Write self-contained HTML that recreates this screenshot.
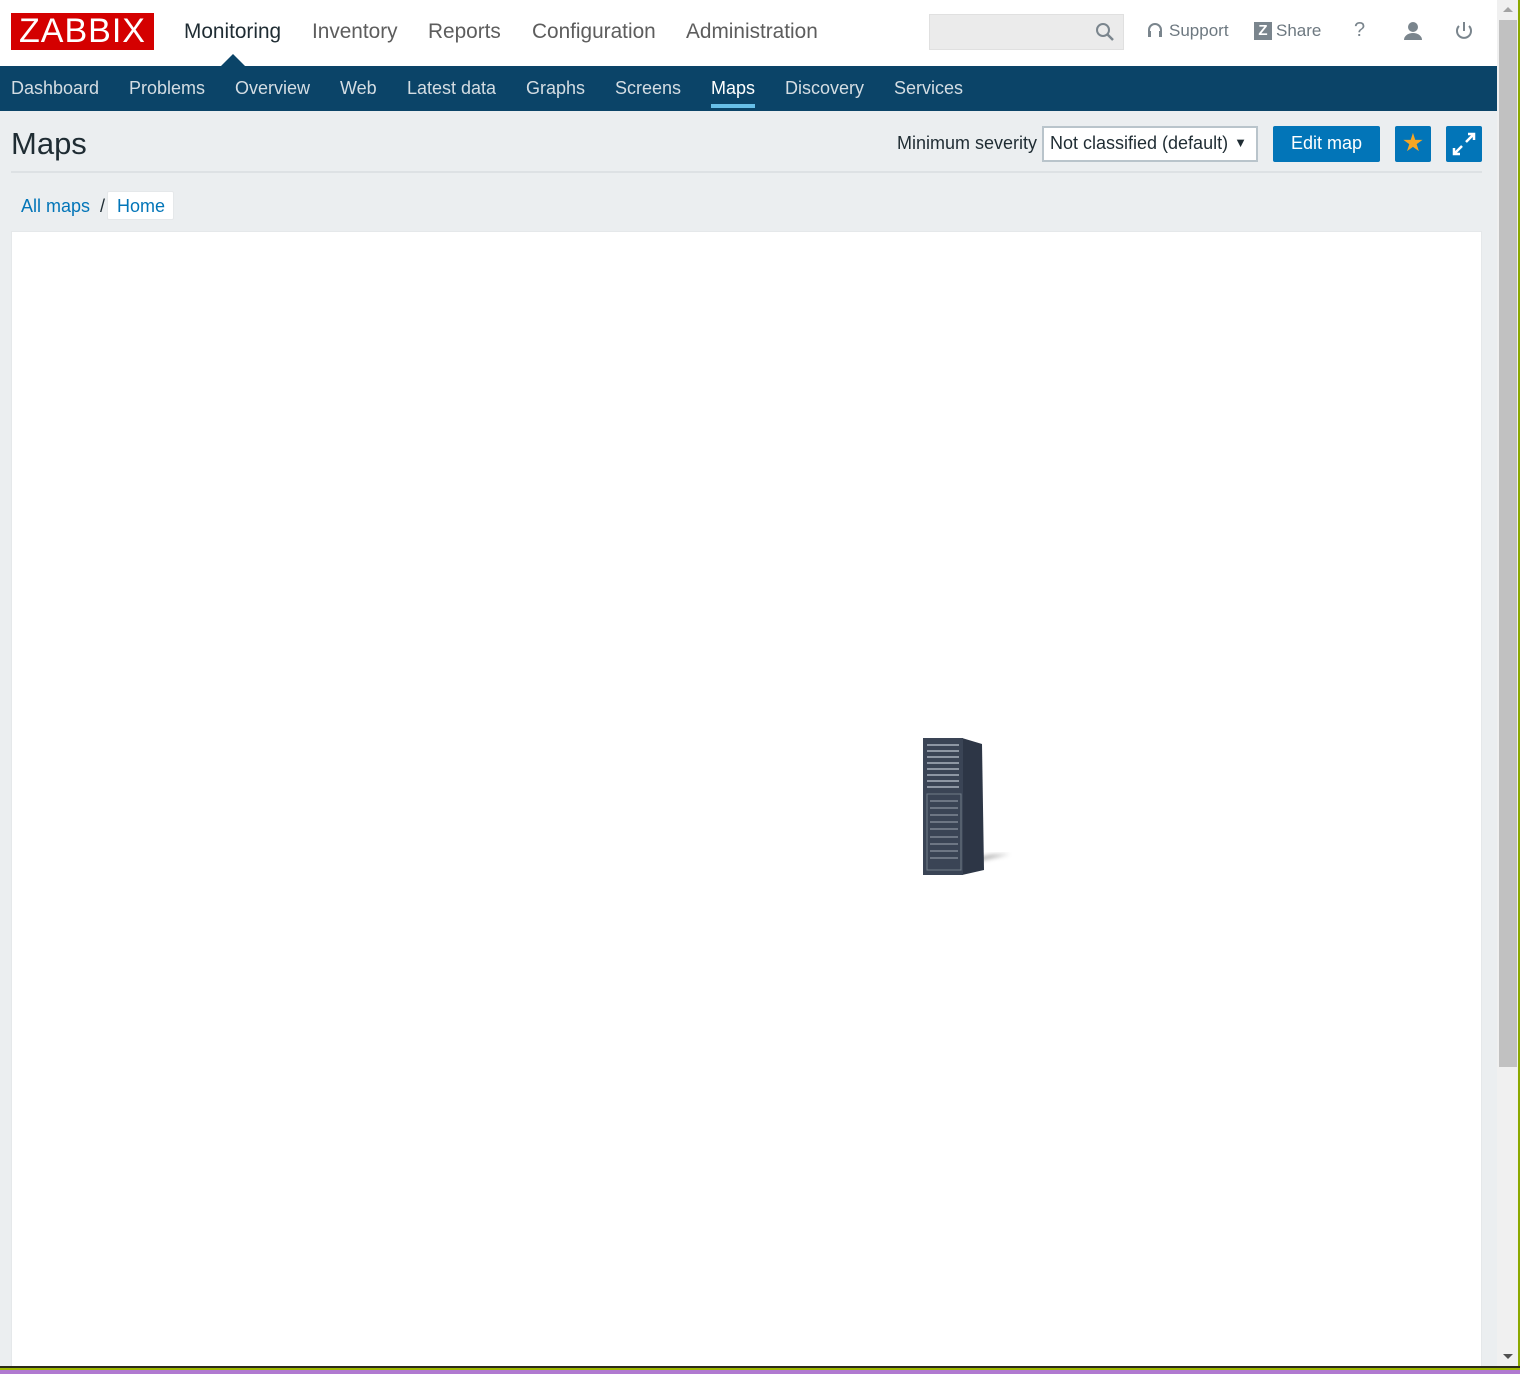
<!DOCTYPE html>
<html><head><style>
*{margin:0;padding:0;box-sizing:border-box}
body{width:1520px;height:1374px;overflow:hidden;background:#ebeef0;font-family:"Liberation Sans",sans-serif;position:relative}
.top{position:absolute;left:0;top:0;width:1497px;height:66px;background:#fff}
.logo{position:absolute;left:11px;top:13px;width:143px;height:37px;background:#d40000;color:#fff;font-size:34px;line-height:37px;text-align:center;letter-spacing:1px}
.mm{position:absolute;top:20px;font-size:20.8px;color:#5d5d5d}
.sub{position:absolute;left:0;top:66px;width:1497px;height:45px;background:#0b4468}
.sm{position:absolute;top:78px;font-size:18px;color:#d4dde3}
.abs{position:absolute}
</style></head><body>
<div class="top"></div>
<div class="logo">ZABBIX</div>
<div class="mm" style="left:184px;color:#1f2c33">Monitoring</div>
<div class="mm" style="left:312px">Inventory</div>
<div class="mm" style="left:428px">Reports</div>
<div class="mm" style="left:532px">Configuration</div>
<div class="mm" style="left:686px">Administration</div>
<div class="abs" style="left:929px;top:14px;width:195px;height:36px;background:#ebebeb;border:1px solid #e0e0e0"></div>
<svg class="abs" style="left:1094px;top:21px" width="22" height="22" viewBox="0 0 22 22"><circle cx="9" cy="9" r="6" fill="none" stroke="#7a858d" stroke-width="2"/><path d="M13 13l6 6" stroke="#7a858d" stroke-width="2.5"/></svg>
<svg class="abs" style="left:1146px;top:22px" width="18" height="18" viewBox="0 0 18 18"><path d="M3 11V8a6 6 0 0 1 12 0v3" fill="none" stroke="#7a858d" stroke-width="2"/><rect x="2" y="9" width="3" height="6" fill="#7a858d"/><rect x="13" y="9" width="3" height="6" fill="#7a858d"/></svg>
<div class="abs" style="left:1169px;top:21px;font-size:17px;color:#6d7880">Support</div>
<div class="abs" style="left:1254px;top:22px;width:18px;height:18px;background:#7a858d;color:#fff;font-weight:bold;font-size:15px;line-height:18px;text-align:center">Z</div>
<div class="abs" style="left:1276px;top:21px;font-size:17px;color:#6d7880">Share</div>
<div class="abs" style="left:1354px;top:19px;font-size:20px;color:#7a858d">?</div>
<svg class="abs" style="left:1402px;top:20px" width="22" height="22" viewBox="0 0 22 22"><circle cx="11" cy="7" r="5" fill="#7a858d"/><path d="M2 20a9 7 0 0 1 18 0z" fill="#7a858d"/></svg>
<svg class="abs" style="left:1453px;top:20px" width="22" height="22" viewBox="0 0 22 22"><path d="M6 6a7 7 0 1 0 10 0" fill="none" stroke="#7a858d" stroke-width="2"/><path d="M11 2v9" stroke="#7a858d" stroke-width="2"/></svg>
<div class="sub"></div>
<svg class="abs" style="left:220px;top:53px" width="26" height="14"><path d="M0 14L13 1L26 14z" fill="#0b4468"/></svg>
<div class="sm" style="left:11px">Dashboard</div>
<div class="sm" style="left:129px">Problems</div>
<div class="sm" style="left:235px">Overview</div>
<div class="sm" style="left:340px">Web</div>
<div class="sm" style="left:407px">Latest data</div>
<div class="sm" style="left:526px">Graphs</div>
<div class="sm" style="left:615px">Screens</div>
<div class="sm" style="left:711px;color:#fff">Maps</div>
<div class="abs" style="left:711px;top:104px;width:44px;height:4px;background:#68bfe8"></div>
<div class="sm" style="left:785px">Discovery</div>
<div class="sm" style="left:894px">Services</div>
<div class="abs" style="left:11px;top:126px;font-size:31px;color:#1f2c33">Maps</div>
<div class="abs" style="left:11px;top:171px;width:1471px;height:2px;background:#dde1e4"></div>
<div class="abs" style="left:897px;top:133px;font-size:18px;color:#1f2c33">Minimum severity</div>
<div class="abs" style="left:1042px;top:126px;width:216px;height:36px;background:#fff;border:2px solid #b9c4cb;font-size:18px;color:#1f2c33;padding:5px 0 0 6px">Not classified (default)<span style="position:absolute;right:9px;top:7px;font-size:13px">▼</span></div>
<div class="abs" style="left:1273px;top:126px;width:107px;height:36px;background:#0275b8;border-radius:2px;color:#fff;font-size:18px;text-align:center;line-height:35px">Edit map</div>
<div class="abs" style="left:1395px;top:126px;width:36px;height:36px;background:#0275b8;border-radius:2px;color:#f5a623;font-size:25px;text-align:center;line-height:35px">★</div>
<div class="abs" style="left:1446px;top:126px;width:36px;height:36px;background:#0275b8;border-radius:2px"></div>
<svg class="abs" style="left:1446px;top:126px" width="36" height="36"><path d="M20 16l7-7M22 8h6v6M16 20l-7 7M8 22v6h6" stroke="#fff" stroke-width="2.5" fill="none"/></svg>
<div class="abs" style="left:21px;top:196px;font-size:18px;color:#0275b8">All maps</div>
<div class="abs" style="left:100px;top:196px;font-size:18px;color:#1f2c33">/</div>
<div class="abs" style="left:107px;top:191px;width:67px;height:29px;background:#fff;border:1px solid #e5e8ea;border-radius:2px;font-size:18px;color:#0275b8;padding:4px 0 0 9px">Home</div>
<div class="abs" style="left:11px;top:231px;width:1471px;height:1140px;background:#fff;border:1px solid #e5e8ea"></div>
<svg class="abs" style="left:910px;top:730px" width="110" height="150">
<defs><filter id="b"><feGaussianBlur stdDeviation="2"/></filter></defs>
<path d="M20 142L100 124L80 125L20 138z" fill="#555" opacity=".5" filter="url(#b)"/>
<path d="M52 8L72 14L74 140L52 145z" fill="#2d3646"/>
<rect x="13" y="8" width="40" height="137" fill="#3a4455"/>
<g fill="#8d96a3"><rect x="17" y="14" width="32" height="2"/><rect x="17" y="20" width="32" height="2"/><rect x="17" y="26" width="32" height="2"/><rect x="17" y="32" width="32" height="2"/><rect x="17" y="38" width="32" height="2"/><rect x="17" y="44" width="32" height="2"/><rect x="17" y="50" width="32" height="2"/><rect x="17" y="56" width="32" height="2"/></g>
<rect x="17" y="64" width="34" height="76" fill="none" stroke="#707b88"/>
<g fill="#6d7684"><rect x="20" y="70" width="28" height="2"/><rect x="20" y="77" width="28" height="2"/><rect x="20" y="84" width="28" height="2"/><rect x="20" y="91" width="28" height="2"/><rect x="20" y="98" width="28" height="2"/><rect x="20" y="106" width="28" height="2"/><rect x="20" y="113" width="28" height="2"/><rect x="20" y="120" width="28" height="2"/><rect x="20" y="127" width="28" height="2"/></g>
</svg>
<div class="abs" style="left:1497px;top:0;width:21px;height:1366px;background:#f0f0f0"></div>
<div class="abs" style="left:1499px;top:20px;width:18px;height:1047px;background:#c1c1c1"></div>
<svg class="abs" style="left:1501px;top:4px" width="14" height="10"><path d="M2 8L7 3L12 8z" fill="#a3a3a3"/></svg>
<svg class="abs" style="left:1501px;top:1352px" width="14" height="10"><path d="M2 2L7 7L12 2z" fill="#505050"/></svg>
<div class="abs" style="left:1518px;top:0;width:2px;height:1374px;background:#8ca800"></div>
<div class="abs" style="left:0;top:1366px;width:1520px;height:2px;background:#2a2a1a"></div>
<div class="abs" style="left:0;top:1368px;width:1520px;height:2px;background:#a0b800"></div>
<div class="abs" style="left:0;top:1370px;width:1520px;height:4px;background:#b07ad0"></div>
</body></html>
